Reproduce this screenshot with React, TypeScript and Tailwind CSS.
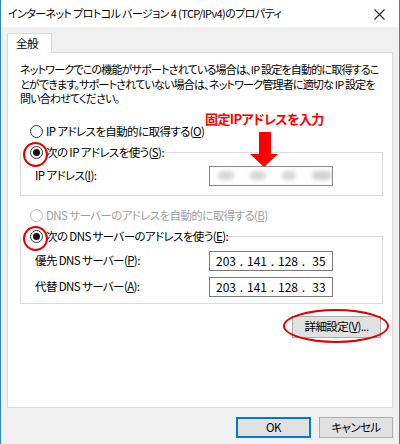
import React from "react";

const font = "[font-family:'Noto_Sans_CJK_JP','Noto_Sans',sans-serif] [font-feature-settings:'palt']";

function Radio({ checked, disabled }: { checked?: boolean; disabled?: boolean }) {
  return (
    <span
      className={`w-[13px] h-[13px] rounded-full border bg-white flex items-center justify-center shrink-0 ${
        disabled ? "border-[#bcbcbc]" : "border-[#333333]"
      }`}
    >
      {checked && <span className="w-[7px] h-[7px] rounded-full bg-[#111]" />}
    </span>
  );
}

function IpField({ parts }: { parts: string[] }) {
  return (
    <div className="w-[124px] h-[20px] border border-[#7a7a7a] bg-white flex items-center pl-[3px] text-[12px] tracking-normal text-black">
      {parts.map((p, i) => (
        <React.Fragment key={i}>
          {i > 0 && <span className="w-[5px] text-center">.</span>}
          <span className="w-[26px] text-center">{p}</span>
        </React.Fragment>
      ))}
    </div>
  );
}

function BlurredField() {
  return (
    <div className="w-[124px] h-[20px] border border-[#8a8a8a] bg-white flex items-center pl-[8px] gap-[16px] overflow-hidden">
      <span className="w-[16px] h-[9px] bg-[#d6d6d6] rounded-full blur-[2px]" />
      <span className="w-[16px] h-[9px] bg-[#d6d6d6] rounded-full blur-[2px]" />
      <span className="w-[14px] h-[9px] bg-[#d6d6d6] rounded-full blur-[2px]" />
      <span className="w-[20px] h-[9px] bg-[#d0d0d0] rounded-full blur-[2px]" />
    </div>
  );
}

export default function App() {
  return (
    <div
      className={`relative w-[400px] h-[444px] bg-[#f0f0f0] border-l border-r border-[#2f86d4] flex flex-col text-[11.5px] tracking-[-0.6px] text-black overflow-hidden ${font}`}
    >
      {/* Title bar */}
      <div className="h-[27px] bg-white flex items-center justify-between pl-[7px] pr-[14px] shrink-0">
        <span className="whitespace-nowrap text-[11px] tracking-[-0.6px]">
          インターネット プロトコル バージョン 4 (TCP/IPv4)のプロパティ
        </span>
        <svg width="11" height="11" viewBox="0 0 11 11" className="mt-[1px]">
          <path d="M0.5 0.5 L10.5 10.5 M10.5 0.5 L0.5 10.5" stroke="#222" strokeWidth="1.1" />
        </svg>
      </div>

      <div className="px-[6px] pt-[6px] flex flex-col">
        {/* Tab */}
        <div className="w-[45px] h-[20px] bg-white border border-b-0 border-[#d9d9d9] flex items-center pl-[8px] relative z-10 -mb-px">
          全般
        </div>

        {/* Panel */}
        <div className="h-[356px] bg-white border border-[#d9d9d9] pt-[9px] pl-[12px] pr-[9px]">
          <p className="leading-[14.5px] whitespace-nowrap text-[11px] tracking-[-0.8px]">
            ネットワークでこの機能がサポートされている場合は、IP 設定を自動的に取得するこ
            <br />
            とができます。サポートされていない場合は、ネットワーク管理者に適切な IP 設定を
            <br />
            問い合わせてください。
          </p>

          <div className="mt-[16px] h-[20px] flex items-center gap-[3px] pl-[10px]">
            <Radio />
            <span className="leading-none">
              IP アドレスを自動的に取得する(<u>O</u>)
            </span>
          </div>

          {/* Group 1 */}
          <div className="mt-[10px] h-[44px] border border-[#dcdcdc]">
            <div className="-mt-[10px] h-[20px] w-[145px] bg-white flex items-center gap-[3px] pl-[9px]">
              <Radio checked />
              <span className="whitespace-nowrap">
                次の IP アドレスを使う(<u>S</u>):
              </span>
            </div>
            <div className="mt-[3px] flex items-center">
              <span className="w-[188px] pl-[14px]">
                IP アドレス(<u>I</u>):
              </span>
              <BlurredField />
            </div>
          </div>

          <div className="mt-[10px] h-[20px] flex items-center gap-[3px] pl-[10px] text-[#a0a0a0]">
            <Radio disabled />
            <span>
              DNS サーバーのアドレスを自動的に取得する(<u>B</u>)
            </span>
          </div>

          {/* Group 2 */}
          <div className="mt-[10px] h-[68px] border border-[#dcdcdc]">
            <div className="-mt-[10px] h-[20px] w-[206px] bg-white flex items-center gap-[3px] pl-[9px]">
              <Radio checked />
              <span className="whitespace-nowrap">
                次の DNS サーバーのアドレスを使う(<u>E</u>):
              </span>
            </div>
            <div className="mt-[4px] flex items-center">
              <span className="w-[188px] pl-[14px]">
                優先 DNS サーバー(<u>P</u>):
              </span>
              <IpField parts={["203", "141", "128", "35"]} />
            </div>
            <div className="mt-[6px] flex items-center">
              <span className="w-[188px] pl-[14px]">
                代替 DNS サーバー(<u>A</u>):
              </span>
              <IpField parts={["203", "141", "128", "33"]} />
            </div>
          </div>

          <div className="mt-[12px] flex justify-end pr-[2px]">
            <button className="w-[89px] h-[22px] bg-[#e1e1e1] border border-[#adadad] flex items-center justify-center">
              詳細設定(<u>V</u>)...
            </button>
          </div>
        </div>

        {/* Footer buttons */}
        <div className="mt-[9px] flex justify-end gap-[8px]">
          <button className="w-[75px] h-[21px] bg-[#e1e1e1] border-2 border-[#0078d7] flex items-center justify-center">
            OK
          </button>
          <button className="w-[74px] h-[21px] bg-[#e1e1e1] border border-[#adadad] flex items-center justify-center">
            キャンセル
          </button>
        </div>
      </div>

      {/* Annotations */}
      <span className="absolute left-[204px] top-[112px] text-[13px] font-bold tracking-[-0.6px] text-[#ff0000] leading-[14px] whitespace-nowrap">
        固定IPアドレスを入力
      </span>
      <svg className="absolute left-[248px] top-[132px]" width="30" height="36" viewBox="0 0 30 36">
        <path d="M10 0 H22 V22 H29 L15 35 L1 22 H10 Z" fill="#ff0000" />
      </svg>
      <span className="absolute left-[22px] top-[142px] w-[25px] h-[25px] rounded-full border-2 border-[#e00000]" />
      <span className="absolute left-[22px] top-[226px] w-[25px] h-[25px] rounded-full border-2 border-[#e00000]" />
      <span className="absolute left-[282px] top-[309px] w-[106px] h-[34px] rounded-[50%] border-2 border-[#e00000]" />
    </div>
  );
}
